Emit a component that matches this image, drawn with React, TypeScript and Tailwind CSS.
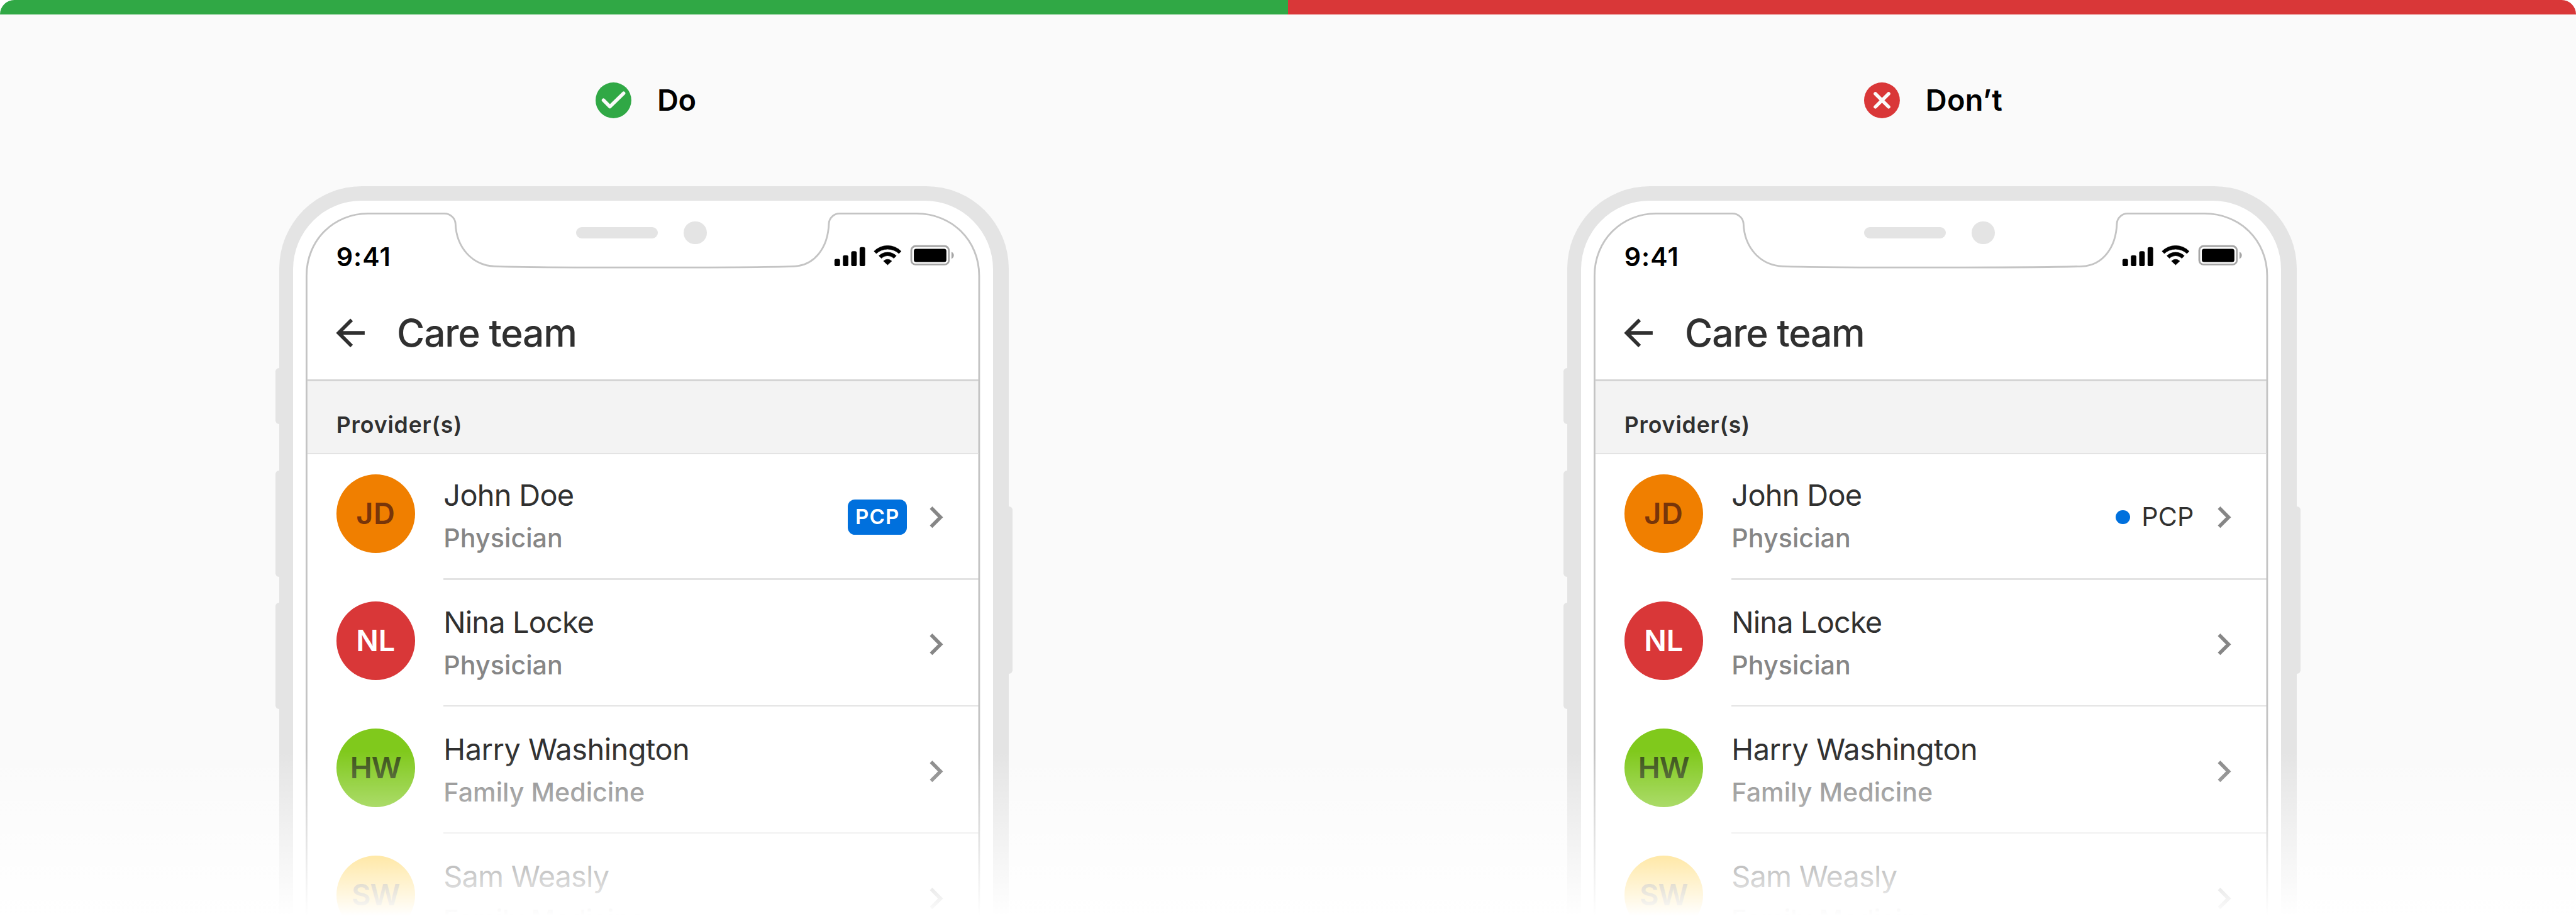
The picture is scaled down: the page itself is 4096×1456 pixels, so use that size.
import React from 'react';

type Provider = {
  initials: string;
  avatar: string;
  name: string;
  nameTracking: string;
  role: string;
  roleTracking: string;
  primary?: boolean;
};

const providers: Provider[] = [
  {
    initials: 'JD',
    avatar: 'bg-[#f07f00] text-[#78350a] tracking-[0.011em]',
    name: 'John Doe',
    nameTracking: 'tracking-[-0.0152em]',
    role: 'Physician',
    roleTracking: 'tracking-[0.001em]',
    primary: true,
  },
  {
    initials: 'NL',
    avatar: 'bg-[#d93738] text-white',
    name: 'Nina Locke',
    nameTracking: 'tracking-[-0.018em]',
    role: 'Physician',
    roleTracking: 'tracking-[0.001em]',
  },
  {
    initials: 'HW',
    avatar: 'bg-[#80c91c] text-[#385115] tracking-[-0.018em]',
    name: 'Harry Washington',
    nameTracking: 'tracking-[-0.0102em]',
    role: 'Family Medicine',
    roleTracking: 'tracking-[0em]',
  },
  {
    initials: 'SW',
    avatar: 'bg-[#ffc10f] text-[#6e5514] tracking-[-0.018em]',
    name: 'Sam Weasly',
    nameTracking: 'tracking-[-0.018em]',
    role: 'Family Medicine',
    roleTracking: 'tracking-[0em]',
  },
];

function DoIcon() {
  return (
    <svg className="size-20 shrink-0" viewBox="0 0 80 80" fill="none">
      <circle cx="40" cy="40" r="40" fill="#30a845" />
      <path d="M17.7 39.7 32 54.2 62.7 24.2" stroke="#fafafa" strokeWidth="7.8" strokeLinecap="round" strokeLinejoin="round" />
    </svg>
  );
}

function DontIcon() {
  return (
    <svg className="size-20 shrink-0" viewBox="0 0 80 80" fill="none">
      <circle cx="40" cy="40" r="40" fill="#d93738" />
      <path d="M25.3 25.3 54.9 54.7M54.9 25.3 25.3 54.7" stroke="#fafafa" strokeWidth="7.8" strokeLinecap="round" />
    </svg>
  );
}

function StatusIcons() {
  return (
    <svg className="h-16 w-68" viewBox="0 0 272 64">
      <rect x="1.2" y="34.5" width="12.4" height="16.2" rx="4" />
      <rect x="20" y="26.3" width="12.2" height="24.4" rx="4" />
      <rect x="38.6" y="17.1" width="12.4" height="33.6" rx="4" />
      <rect x="57.4" y="8" width="12.4" height="42.7" rx="4" />
      <g stroke="#000" strokeWidth="1" strokeLinejoin="round">
        <path d="M89.7 17.5A42.5 42.5 0 0 1 150.3 17.5L145.2 22.4A37.5 37.5 0 0 0 94.8 22.4Z" />
        <path d="M100.6 27.5A28.3 28.3 0 0 1 139.4 27.5L134 33A20 20 0 0 0 106 33Z" />
        <path d="M110.9 39.4A12.5 12.5 0 0 1 129.1 39.4L120 47.9Z" />
      </g>
      <rect x="173" y="6" width="84" height="41" rx="9.5" fill="none" stroke="#a6a6a6" strokeWidth="4" />
      <rect x="178.7" y="11.8" width="72.8" height="29.8" rx="5" />
      <path d="M262.8 18.6C266 20 268.2 23 268.2 26.5S266 33 262.8 34.6Z" fill="#a6a6a6" />
    </svg>
  );
}

function BackArrow() {
  return (
    <svg className="size-24" viewBox="0 0 24 24" fill="#303030">
      <path d="M20 11H7.83l5.59-5.59L12 4l-8 8 8 8 1.41-1.41L7.83 13H20v-2z" />
    </svg>
  );
}

function Chevron() {
  return (
    <svg className="size-24 shrink-0" viewBox="0 0 24 24" fill="#868686">
      <path d="M10 6 8.59 7.41 13.17 12l-4.58 4.59L10 18l6-6z" />
    </svg>
  );
}

/* Screen edge with the notch cut into its top side. */
function ScreenOutline() {
  return (
    <svg className="absolute top-7 left-7 h-400 w-377" viewBox="0 0 1508 1600" fill="none">
      <path
        d="M2 1600V141C2 62 62 2 140 2H310C323 2 334 12 335 24C337 80 374 118 423 120C520 123.5 990 123.5 1092 120C1137 118 1168 80 1170 24C1171 12 1181 2 1194 2H1366C1445 2 1506 62 1506 141V1600"
        stroke="#c4c4c4"
        strokeWidth="4"
      />
    </svg>
  );
}

function PcpBadge() {
  return (
    <span className="mr-4 flex h-20 w-33 items-center justify-center rounded-[11.4px] bg-[#0070dd] text-[33.1px] leading-none font-semibold tracking-[0.036em] text-white">
      PCP
    </span>
  );
}

function PcpDot() {
  return (
    <span className="mr-[13px] flex items-center gap-[18px] text-[41.2px] leading-none tracking-[0.005em] text-[#303030]">
      <span className="size-8 rounded-full bg-[#0070dd]" />
      PCP
    </span>
  );
}

function Row({ provider, marker }: { provider: Provider; marker: React.ReactNode }) {
  return (
    <div className="flex h-71 pl-16">
      <div
        className={`mt-12 mr-16 flex size-44 shrink-0 items-center justify-center rounded-full text-[46.9px] leading-none font-semibold ${provider.avatar}`}
      >
        {provider.initials}
      </div>
      <div className="flex flex-1 flex-col">
        <div className="flex h-70 pt-12 pr-12">
          <div className="flex-1">
            <div className={`flex h-24 items-center text-[46.9px] leading-none whitespace-nowrap text-[#303030] ${provider.nameTracking}`}>
              {provider.name}
            </div>
            <div className={`flex h-23.5 items-center text-[41.2px] leading-none font-medium whitespace-nowrap text-[#868686] ${provider.roleTracking}`}>
              {provider.role}
            </div>
          </div>
          <div className="flex h-48 items-center">
            {provider.primary && marker}
            <Chevron />
          </div>
        </div>
        <div className="h-1 bg-[#e3e3e3]" />
      </div>
    </div>
  );
}

function Phone({ marker }: { marker: React.ReactNode }) {
  return (
    <div className="relative mt-38 ml-156 h-420 w-408 rounded-t-[131px] bg-[#e4e4e4] pt-8 pr-9 pl-8">
      <div className="absolute top-[289px] -left-2 h-[89px] w-4 rounded-l-[5.7px] bg-[#e4e4e4]" />
      <div className="absolute top-[452px] -left-2 h-[169px] w-4 rounded-l-[5.7px] bg-[#e4e4e4]" />
      <div className="absolute top-[662px] -left-2 h-[169px] w-4 rounded-l-[5.7px] bg-[#e4e4e4]" />
      <div className="absolute top-[509px] -right-2 h-[266px] w-4 rounded-r-[5.7px] bg-[#e4e4e4]" />

      <div className="relative h-full rounded-t-[109px] bg-white px-8">
        <ScreenOutline />
        <div className="absolute top-[42.5px] left-[450px] h-[18px] w-[130px] rounded-full bg-[#e4e4e4]" />
        <div className="absolute top-[33.4px] left-[621px] size-[36.2px] rounded-full bg-[#e4e4e4]" />

        <div className="flex h-48 items-end justify-between pr-13 pb-8 pl-16">
          <span className="mb-[1px] flex h-16 items-center text-[41.2px] leading-none font-semibold tracking-[0.025em] text-black">9:41</span>
          <StatusIcons />
        </div>

        <div className="flex h-52 items-center gap-[39.5px] pl-12">
          <BackArrow />
          <span className="text-[60.4px] leading-none font-medium tracking-[-0.02em] text-[#303030]">Care team</span>
        </div>

        <div className="h-1 bg-[#d4d4d4]" />
        <div className="flex h-40 bg-[#f3f3f3] pt-[12px] pl-16 text-[35.6px] font-semibold tracking-[0.0246em] text-[#303030]">
          <span className="mt-12 leading-[48px]">Provider(s)</span>
        </div>
        <div className="relative -mb-1 h-1 bg-[#e3e3e3]" />

        {providers.map((provider) => (
          <Row key={provider.name} provider={provider} marker={marker} />
        ))}
      </div>
    </div>
  );
}

type PanelProps = {
  bar: string;
  labelOffset: string;
  icon: React.ReactNode;
  label: string;
  labelTracking: string;
  marker: React.ReactNode;
};

function Panel({ bar, labelOffset, icon, label, labelTracking, marker }: PanelProps) {
  return (
    <section className="w-720">
      <div className={`h-8 ${bar}`} />
      <div className={`flex items-center gap-[41px] pt-38 ${labelOffset}`}>
        {icon}
        <span className={`text-[46.9px] leading-none font-semibold text-black ${labelTracking}`}>{label}</span>
      </div>
      <Phone marker={marker} />
    </section>
  );
}

export default function App() {
  return (
    <main className="relative h-[1456px] w-[4096px] overflow-hidden bg-white font-['Inter',sans-serif] [--spacing:2.84444px]">
      <div className="flex h-full overflow-hidden rounded-t-[22.7px] bg-[#fafafa]">
        <Panel
          bar="bg-[#30a845]"
          labelOffset="pl-333"
          icon={<DoIcon />}
          label="Do"
          labelTracking="tracking-[-0.01em]"
          marker={<PcpBadge />}
        />
        <Panel
          bar="bg-[#d93738]"
          labelOffset="pl-322"
          icon={<DontIcon />}
          label="Don’t"
          labelTracking="tracking-[0.007em]"
          marker={<PcpDot />}
        />
      </div>
      <div className="pointer-events-none absolute inset-x-0 bottom-0 h-92 bg-linear-to-b from-white/0 to-white" />
    </main>
  );
}
